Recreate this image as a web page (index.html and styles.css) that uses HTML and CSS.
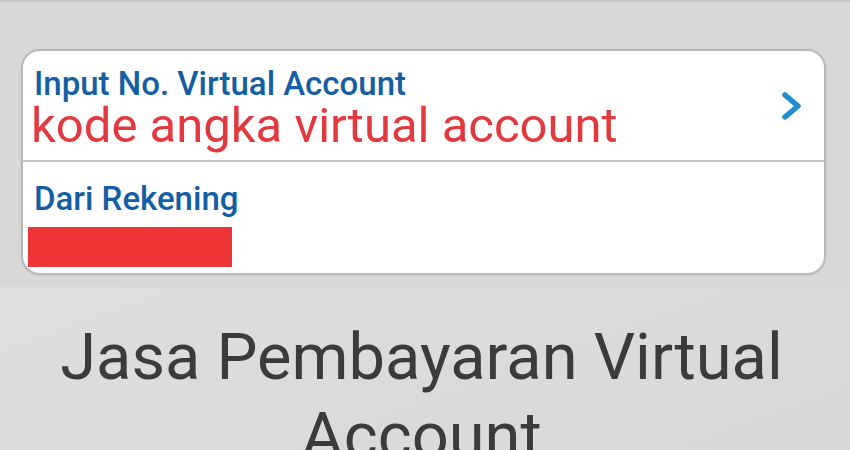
FILE: index.html
```html
<!DOCTYPE html>
<html>
<head>
<meta charset="utf-8">
<link rel="stylesheet" href="styles.css">
</head>
<body>
<div class="top">
  <div class="card">
    <div class="row row-first">
      <div class="row-text">
        <div class="label">Input No. Virtual Account</div>
        <div class="value">kode angka virtual account</div>
      </div>
      <svg class="chev" width="24" height="28" viewBox="0 0 24 28"><path d="M5 3 L18 14 L5 25" fill="none" stroke="#1f8dd0" stroke-width="5.5" stroke-linecap="round" stroke-linejoin="round"/></svg>
    </div>
    <div class="row row-second">
      <div class="label">Dari Rekening</div>
      <div class="redbar"></div>
    </div>
  </div>
</div>
<div class="bottom">
  <div class="title">Jasa Pembayaran Virtual Account</div>
</div>
</body>
</html>
```
FILE: styles.css
```css
html, body { margin: 0; padding: 0; }
body {
  width: 850px;
  height: 450px;
  overflow: hidden;
  background: #d9d9d9;
  font-family: Roboto, "Liberation Sans", sans-serif;
}
.top {
  height: 287px;
  box-sizing: border-box;
  border-top: 2px solid #c6c6c6;
  padding: 47px 24px 0 21px;
  background: #d8d8d8;
}
.card {
  background: #fff;
  border: 2px solid #b9b9b9;
  border-radius: 19px;
  height: 226px;
  box-sizing: border-box;
  display: flex;
  flex-direction: column;
  box-shadow: 0 1px 2px rgba(0,0,0,0.08);
}
.row-first {
  height: 111px;
  border-bottom: 2px solid #c4c4c4;
  display: flex;
  align-items: flex-start;
  justify-content: space-between;
  padding: 15px 20px 0 8px;
  box-sizing: border-box;
}
.label {
  color: #145ea3;
  font-size: 33px;
  font-weight: 500;
  line-height: 36px;
  padding-left: 3px;
}
.value {
  color: #e2393f;
  font-size: 49px;
  line-height: 47px;
}
.chev { margin-top: 26px; }
.row-second {
  padding: 19px 0 0 8px;
}
.redbar {
  width: 204px;
  height: 40px;
  background: #ee3536;
  margin-top: 10px;
  margin-left: -3px;
}
.bottom {
  height: 163px;
  background: linear-gradient(160deg, #dedede 0%, #d8d8d8 100%);
  padding: 31px 7px 0 0;
  box-sizing: border-box;
}
.title {
  width: 740px;
  margin: 0 auto;
  text-align: center;
  color: #3b3b3b;
  font-size: 65px;
  line-height: 79px;
}
```
